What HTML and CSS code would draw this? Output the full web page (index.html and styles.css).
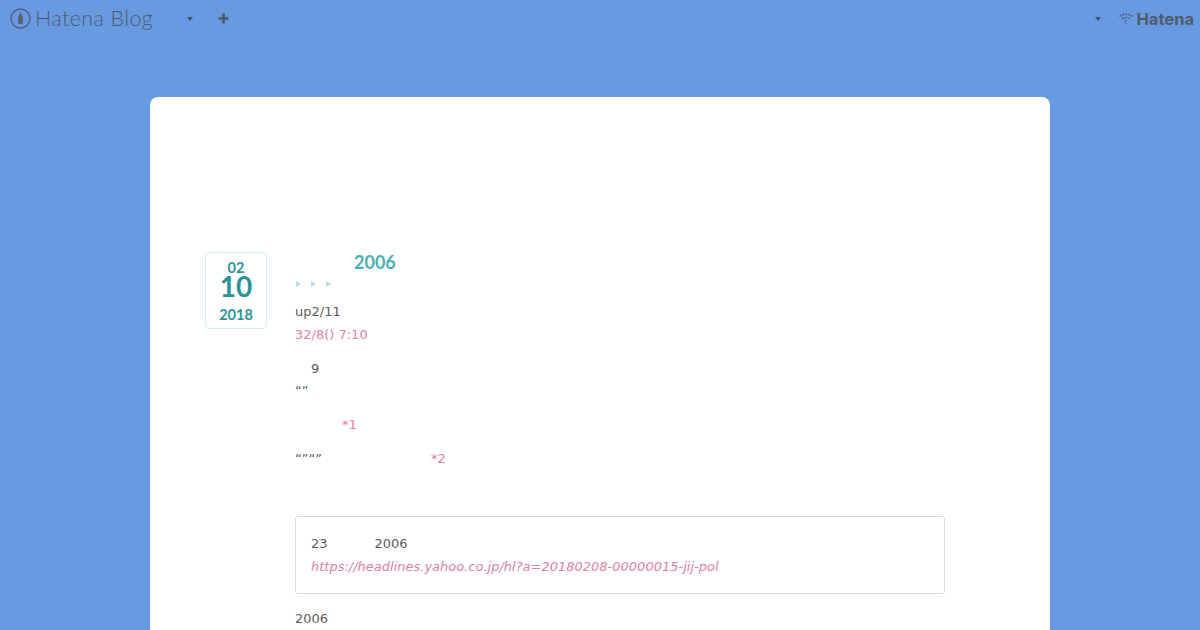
FILE: index.html
```html
<!DOCTYPE html>
<html lang="en">
<head>
    <meta charset="UTF-8">
    <meta name="viewport" content="width=device-width, initial-scale=1.0">
    <link rel="stylesheet" href="styles.css">
    <title>Hatena Blog</title>
</head>
<body>
    <div class="globalheader">
        <div class="header-left">
            <a class="blog-logo" href="#">
                <svg class="blog-mark" width="21" height="21" viewBox="0 0 21 21">
                    <circle cx="10.5" cy="10.5" r="9.5" fill="none" stroke="#4f5f78" stroke-width="1.3"/>
                    <path d="M9.6 4.5h1.8v2.6c1 .7 1.5 1.5 1.5 2.6v6.1H8.100V9.700c0-1.100.5-1.900 1.500-2.600z" fill="#5c5f6c"/>
                </svg>
                <span class="blog-name">Hatena Blog</span>
            </a>
            <span class="caret caret-blog"></span>
            <span class="plus">
                <svg width="11" height="11" viewBox="0 0 11 11"><path d="M4.200 0.500h2.600v3.700h3.700v2.600H6.800v3.700H4.200V6.800H0.500V4.200h3.700z" fill="#4c5668"/></svg>
            </span>
        </div>
        <div class="header-right">
            <span class="caret"></span>
            <a class="hatena-logo" href="#">
                <svg width="14" height="12" viewBox="0 0 14 12">
                    <path d="M0.500 3.500C4 0.500 10 0.500 13.500 3.500M3 6C5.500 4 8.500 4 11 6M5.500 8.500C6.500 7.800 7.500 7.800 8.500 8.500M6.500 10.800h1" fill="none" stroke="#4c5668" stroke-width="1.200" stroke-dasharray="2 1"/>
                </svg>
                <span class="hatena-name">Hatena</span>
            </a>
        </div>
    </div>

    <div class="container">
        <article class="entry">
            <div class="date-box">
                <span class="date-month">02</span>
                <span class="date-day">10</span>
                <span class="date-year">2018</span>
            </div>
            <div class="entry-inner">
                <h1 class="entry-title">2006</h1>
                <div class="categories">
                    <span class="tri"></span>
                    <span class="tri"></span>
                    <span class="tri"></span>
                </div>
                <div class="entry-content">
                    <p class="line">up2/11</p>
                    <p class="line pink">32/8() 7:10</p>
                    <p class="line section"><span class="indent">9</span></p>
                    <p class="line">“”</p>
                    <p class="line section"><a class="note note-1" href="#">*1</a></p>
                    <p class="line section">“”“”<a class="note note-2" href="#">*2</a></p>
                    <blockquote class="quote">
                        <p class="quote-line">23<span class="quote-year">2006</span></p>
                        <p class="quote-line"><a class="quote-link" href="#">https://headlines.yahoo.co.jp/hl?a=20180208-00000015-jij-pol</a></p>
                    </blockquote>
                    <p class="line">2006</p>
                </div>
            </div>
        </article>
    </div>
</body>
</html>
```

FILE: styles.css
```css
html, body {
    height: 630px;
    overflow: hidden;
}

body {
    margin: 0;
    background-color: #679ae0;
    font-family: 'DejaVu Sans', sans-serif;
    font-size: 13px;
    color: #5c5c5c;
}

a {
    text-decoration: none;
}

p {
    margin: 0;
}

.globalheader {
    display: flex;
    justify-content: space-between;
    height: 37px;
    padding: 0 6px 0 10px;
}

.header-left, .header-right {
    display: flex;
    align-items: flex-start;
}

.blog-logo {
    display: flex;
    align-items: center;
    height: 37px;
}

.blog-logo, .hatena-logo {
    color: #4f5a6c;
}

.blog-name {
    margin-left: 4px;
    margin-top: -2px;
    font-family: 'Lato', sans-serif;
    font-weight: 300;
    font-size: 21.5px;
    letter-spacing: 0.4px;
}

.caret {
    width: 0;
    height: 0;
    margin-top: 17px;
    border-top: 4px solid #4c5668;
    border-left: 3px solid transparent;
    border-right: 3px solid transparent;
}

.caret-blog {
    margin-left: 34px;
}

.plus {
    display: flex;
    margin-top: 13px;
    margin-left: 25px;
}

.hatena-logo {
    display: flex;
    align-items: center;
    height: 37px;
    margin-left: 18px;
}

.hatena-name {
    margin-left: 4px;
    margin-top: 1px;
    font-family: 'Inter', sans-serif;
    font-weight: 700;
    font-size: 16.5px;
}

.container {
    width: 900px;
    height: 533px;
    box-sizing: border-box;
    margin: 60px auto 0;
    padding: 155px 105px 0 55px;
    background-color: #fff;
    border-radius: 8px 8px 0 0;
}

.entry {
    display: flex;
    align-items: flex-start;
}

.date-box {
    display: flex;
    flex-direction: column;
    align-items: center;
    flex: none;
    width: 62px;
    height: 77px;
    box-sizing: border-box;
    margin-right: 28px;
    padding-top: 6px;
    border: 1px solid #d6eeee;
    border-radius: 4px;
    font-family: 'Lato', sans-serif;
    font-weight: 700;
    color: #2a9499;
}

.date-month {
    font-size: 14.5px;
    line-height: 17px;
}

.date-day {
    font-size: 28px;
    line-height: 20px;
}

.date-year {
    margin-top: 10px;
    font-size: 14.5px;
    line-height: 17px;
}

.entry-inner {
    flex: 1;
    min-width: 0;
}

.entry-title {
    margin: 0;
    padding-left: 59px;
    font-family: 'Lato', sans-serif;
    font-weight: 700;
    font-size: 18px;
    line-height: 20px;
    color: #4bb0b0;
}

.categories {
    display: flex;
    gap: 10px;
    margin-top: 8px;
    height: 8px;
    align-items: center;
    padding-left: 1px;
}

.tri {
    width: 0;
    height: 0;
    border-left: 5px solid #b2dce6;
    border-top: 3px solid transparent;
    border-bottom: 3px solid transparent;
}

.entry-content {
    margin-top: 13px;
}

.line {
    line-height: 22.75px;
}

.section {
    margin-top: 11px;
}

.pink, .note {
    color: #e5809f;
}

.indent {
    margin-left: 16px;
}

.note-1 {
    margin-left: 47px;
}

.note-2 {
    margin-left: 109px;
}

.quote {
    height: 78px;
    box-sizing: border-box;
    margin: 45px 0 14px;
    padding: 15px 15px 0;
    border: 1px solid #d9d9d9;
    border-radius: 3px;
}

.quote-line {
    line-height: 23px;
}

.quote-year {
    margin-left: 47px;
}

.quote-link {
    font-style: italic;
    color: #e080a0;
}
```
